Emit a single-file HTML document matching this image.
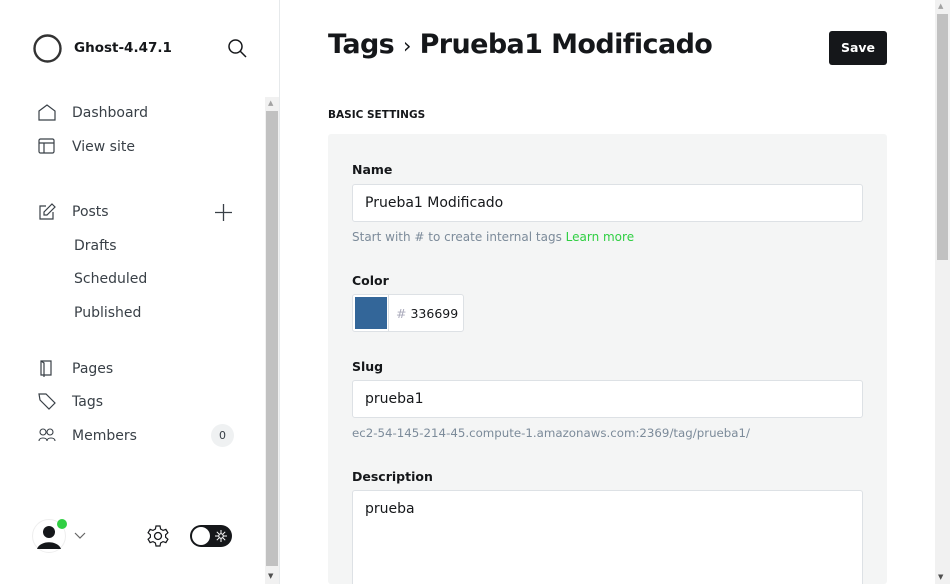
<!DOCTYPE html>
<html style="overflow:hidden"><head><meta charset="utf-8"><style>
*{box-sizing:border-box;margin:0;padding:0}
html,body{width:950px;height:584px;overflow:hidden}
body{font-family:"DejaVu Sans","Liberation Sans",sans-serif;background:#fff;position:relative;color:#15171a}
.sb{position:absolute;left:0;top:0;width:280px;height:584px;border-right:1px solid #e6e9eb}
.t{position:absolute;white-space:nowrap}
.nav{font-size:14px;color:#394047}
.ic{position:absolute}
.lbl{position:absolute;left:352px;font-size:12.5px;font-weight:bold;color:#15171a}
.inp{position:absolute;left:352px;width:511px;background:#fff;border:1px solid #dde1e5;border-radius:3px;font-size:14px;padding-left:12px;color:#15171a}
.help{position:absolute;left:352px;font-size:12px;color:#7c8b9a}
</style></head><body>
<div class="sb">
<svg class="ic" style="left:32px;top:33px" width="31" height="31" viewBox="0 0 31 31"><circle cx="15.5" cy="15.5" r="13" fill="none" stroke="#333" stroke-width="2.4"/></svg>
<div class="t" style="left:74px;top:40px;font-size:13.5px;font-weight:bold">Ghost-4.47.1</div>
<svg class="ic" style="left:227px;top:38px" width="20" height="20" viewBox="0 0 20 20"><circle cx="8.5" cy="8.5" r="6.5" fill="none" stroke="#15171a" stroke-width="1.5"/><path d="M13 13l6 6" stroke="#15171a" stroke-width="1.5"/></svg>
<svg class="ic" style="left:38px;top:104px" width="18" height="17" viewBox="0 0 18 17"><path d="M1 7L9 1l8 6v9H1z" fill="none" stroke="#394047" stroke-width="1.2"/></svg>
<div class="t nav" style="left:72px;top:105px">Dashboard</div>
<svg class="ic" style="left:38px;top:138px" width="18" height="17" viewBox="0 0 18 17"><rect x="1" y="1" width="15" height="14" rx="1.5" fill="none" stroke="#394047" stroke-width="1.2"/><path d="M1 5h15M6 5v10" stroke="#394047" stroke-width="1.2"/></svg>
<div class="t nav" style="left:72px;top:139px">View site</div>
<svg class="ic" style="left:38px;top:203px" width="18" height="17" viewBox="0 0 18 17"><path d="M8 3H2v13h13V9" fill="none" stroke="#394047" stroke-width="1.2"/><path d="M14 1l3 3-8 8H6V9z" fill="none" stroke="#394047" stroke-width="1.2"/></svg>
<div class="t nav" style="left:72px;top:204px">Posts</div>
<svg class="ic" style="left:214px;top:203px" width="19" height="19" viewBox="0 0 19 19"><path d="M9.5 1v17M1 9.5h17" stroke="#394047" stroke-width="1.3"/></svg>
<div class="t nav" style="left:74px;top:238px">Drafts</div>
<div class="t nav" style="left:74px;top:271px">Scheduled</div>
<div class="t nav" style="left:74px;top:305px">Published</div>
<svg class="ic" style="left:38px;top:360px" width="18" height="17" viewBox="0 0 18 17"><path d="M3 1h10v14H3z M3 1l3 2v14" fill="none" stroke="#394047" stroke-width="1.2"/></svg>
<div class="t nav" style="left:72px;top:361px">Pages</div>
<svg class="ic" style="left:38px;top:393px" width="18" height="17" viewBox="0 0 18 17"><path d="M1 1h7l9 9-6 6-9-9z" fill="none" stroke="#394047" stroke-width="1.2"/></svg>
<div class="t nav" style="left:72px;top:394px">Tags</div>
<svg class="ic" style="left:38px;top:428px" width="18" height="15" viewBox="0 0 18 15"><circle cx="5" cy="4" r="3" fill="none" stroke="#394047" stroke-width="1.1"/><circle cx="12" cy="4" r="3" fill="none" stroke="#394047" stroke-width="1.1"/><path d="M1 13c0-4 8-4 8 0M9 13c0-4 8-4 8 0" fill="none" stroke="#394047" stroke-width="1.1"/></svg>
<div class="t nav" style="left:72px;top:428px">Members</div>
<div class="t" style="left:211px;top:424px;width:23px;height:23px;border-radius:12px;background:#eff1f2;font-size:11px;color:#394047;text-align:center;line-height:23px">0</div>
<svg class="ic" style="left:32px;top:518px" width="36" height="36" viewBox="0 0 36 36"><circle cx="17" cy="18" r="16.5" fill="#fff" stroke="#eee"/><circle cx="17" cy="14" r="6" fill="#15171a"/><path d="M5 31c3-9 21-9 24 0z" fill="#15171a"/><circle cx="30" cy="6" r="5" fill="#30cf43"/></svg>
<svg class="ic" style="left:74px;top:532px" width="12" height="8" viewBox="0 0 12 8"><path d="M1 1l5 5 5-5" fill="none" stroke="#666" stroke-width="1.2"/></svg>
<svg class="ic" style="left:147px;top:525px" width="22" height="22" viewBox="0 0 22 22"><circle cx="11" cy="11" r="3.5" fill="none" stroke="#15171a" stroke-width="1.3"/><path d="M9 1h4l.6 3 2.4 1.4 2.9-1 2 3.4-2.3 2v2.4l2.3 2-2 3.4-2.9-1L13.6 18 13 21H9l-.6-3L6 16.6l-2.9 1-2-3.4 2.3-2V9.8l-2.3-2 2-3.4 2.9 1L8.4 4z" fill="none" stroke="#15171a" stroke-width="1.2"/></svg>
<div class="t" style="left:190px;top:525px;width:42px;height:22px;border-radius:11px;background:#15171a"></div>
<div class="t" style="left:192px;top:527px;width:18px;height:18px;border-radius:9px;background:#fff"></div>
<svg class="ic" style="left:214px;top:529px" width="14" height="14" viewBox="0 0 14 14"><path d="M7 1v12M1 7h12M2.8 2.8l8.4 8.4M11.2 2.8l-8.4 8.4" stroke="#fff" stroke-width="1"/><circle cx="7" cy="7" r="2.2" fill="#15171a" stroke="#fff"/></svg>
<div class="t" style="left:265px;top:97px;width:14px;height:487px;background:#f1f1f1"></div>
<div class="t" style="left:266px;top:111px;width:12px;height:455px;background:#c1c1c1"></div>
<div class="t" style="left:268px;top:99px;font-size:7px;color:#a3a3a3">▲</div>
<div class="t" style="left:268px;top:572px;font-size:7px;color:#505050">▼</div>
</div>
<div class="t" style="left:328px;top:29px;font-size:27px;font-weight:bold;letter-spacing:-0.6px">Tags <span style="font-weight:normal;font-size:21px">›</span> Prueba1 Modificado</div>
<div class="t" style="left:829px;top:31px;width:58px;height:34px;background:#15171a;border-radius:3px;color:#fff;font-size:12.5px;font-weight:bold;text-align:center;line-height:34px">Save</div>
<div class="t" style="left:328px;top:109px;font-size:10.5px;font-weight:bold;color:#15171a">BASIC SETTINGS</div>
<div class="t" style="left:328px;top:134px;width:559px;height:450px;background:#f4f5f5;border-radius:3px"></div>
<div class="lbl t" style="top:162px">Name</div>
<div class="inp" style="top:184px;height:38px;line-height:37px">Prueba1 Modificado</div>
<div class="help t" style="top:230px">Start with # to create internal tags <span style="color:#30cf43">Learn more</span></div>
<div class="lbl t" style="top:273px">Color</div>
<div class="t" style="left:352px;top:294px;width:112px;height:38px;background:#fff;border:1px solid #dde1e5;border-radius:3px"></div>
<div class="t" style="left:355px;top:297px;width:32px;height:32px;background:#336699"></div>
<div class="t" style="left:388px;top:295px;width:1px;height:36px;background:#dde1e5"></div>
<div class="t" style="left:396px;top:306px;font-size:12.5px;color:#15171a"><span style="color:#aab">#</span> 336699</div>
<div class="lbl t" style="top:359px">Slug</div>
<div class="inp" style="top:380px;height:38px;line-height:37px">prueba1</div>
<div class="help t" style="top:426px;font-size:11.8px">ec2-54-145-214-45.compute-1.amazonaws.com:2369/tag/prueba1/</div>
<div class="lbl t" style="top:469px">Description</div>
<div class="inp" style="top:490px;height:94px;padding-top:10px;border-bottom:none;border-radius:3px 3px 0 0">prueba</div>
<div class="t" style="left:935px;top:0;width:15px;height:584px;background:#f1f1f1"></div>
<div class="t" style="left:937px;top:14px;width:11px;height:246px;background:#c1c1c1"></div>
<div class="t" style="left:938px;top:2px;font-size:7px;color:#a3a3a3">▲</div>
<div class="t" style="left:938px;top:573px;font-size:7px;color:#505050">▼</div>
</body></html>
